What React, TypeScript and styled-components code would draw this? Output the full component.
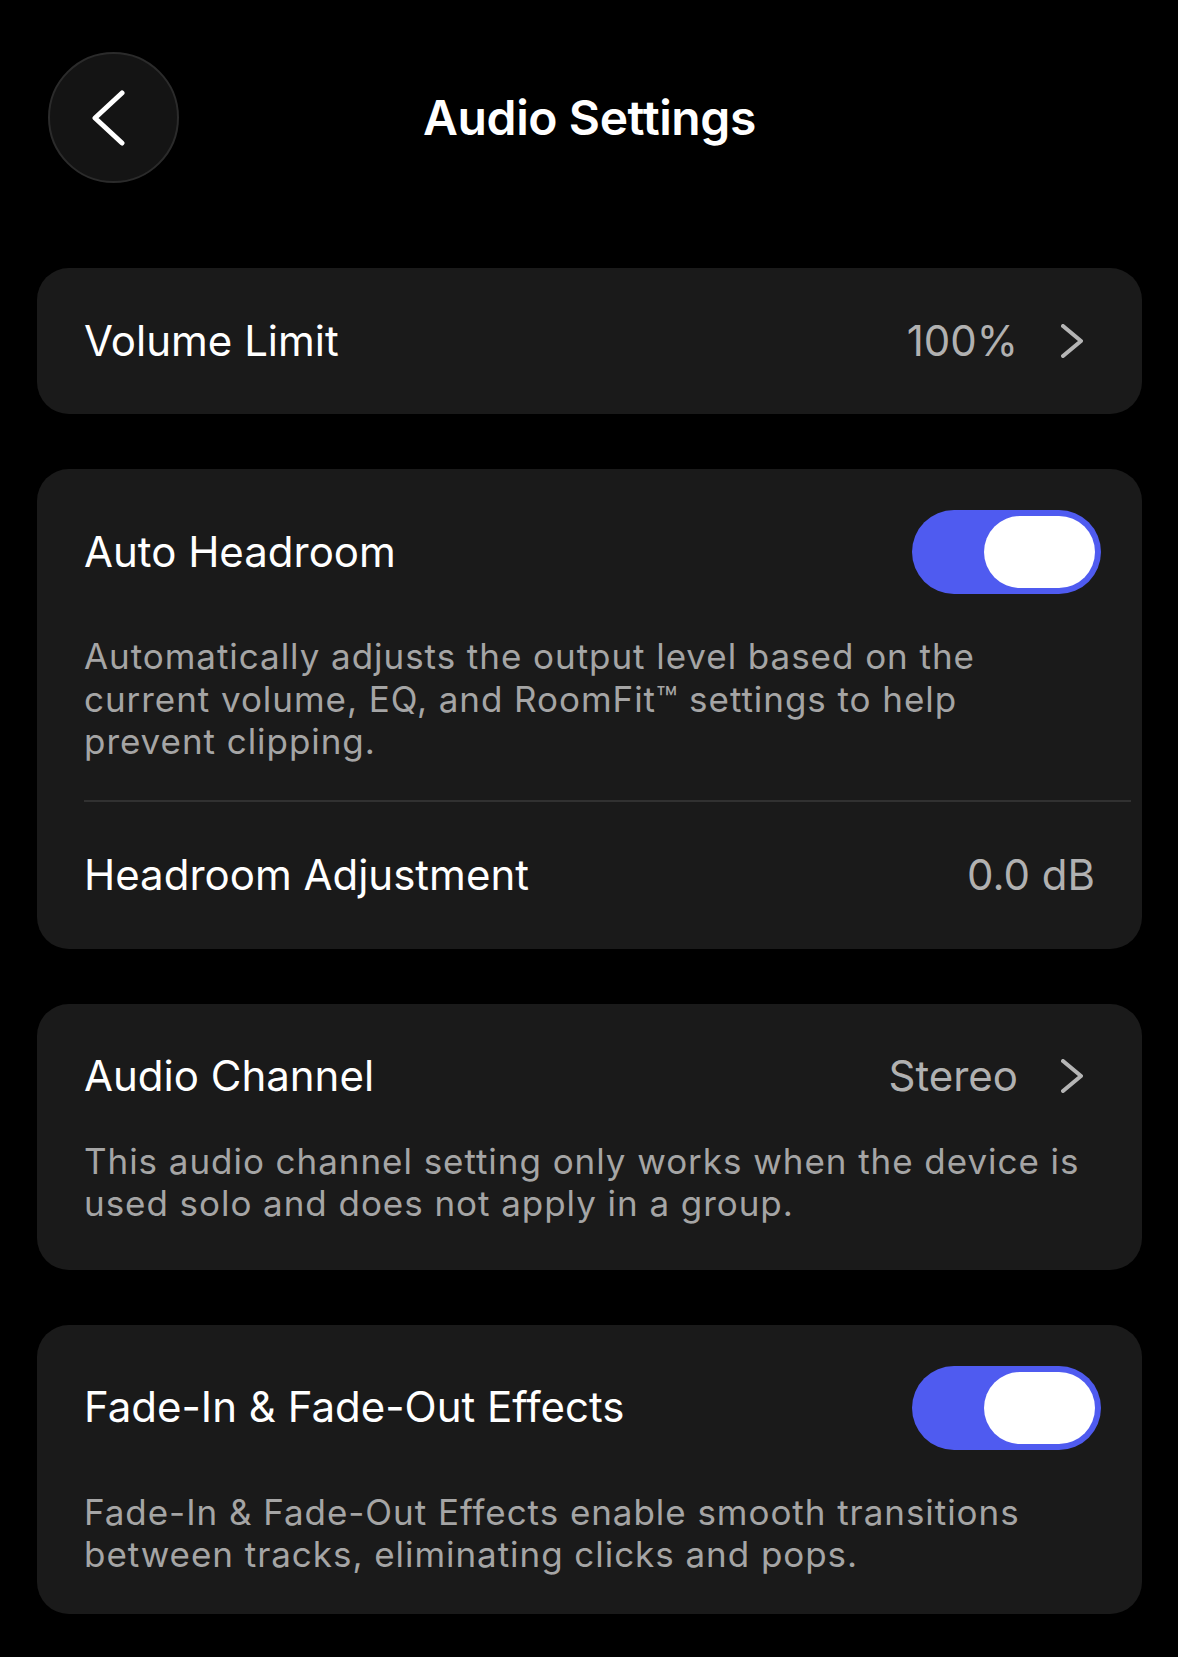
import React from "react";
import styled, { createGlobalStyle } from "styled-components";

const GlobalStyle = createGlobalStyle`
  html, body {
    margin: 0;
    padding: 0;
    background: #000;
  }
  body {
    font-family: Inter, "Noto Sans", "Liberation Sans", sans-serif;
    -webkit-font-smoothing: antialiased;
  }
`;

const Page = styled.div`
  width: 1178px;
  min-height: 1657px;
  box-sizing: border-box;
  background: #000;
  padding: 52px 36px 40px 37px;
  display: flex;
  flex-direction: column;
`;

const Header = styled.header`
  display: grid;
  grid-template-columns: 1fr auto 1fr;
  align-items: center;
  margin-bottom: 85px;
`;

const BackButton = styled.button`
  width: 131px;
  height: 131px;
  margin-left: 11px;
  border-radius: 50%;
  background: #141414;
  border: 2px solid #2b2b2b;
  box-sizing: border-box;
  display: flex;
  align-items: center;
  justify-content: center;
  padding: 0 10px 0 0;
  cursor: pointer;
  justify-self: start;
`;

const Title = styled.h1`
  margin: 0;
  color: #fff;
  font-size: 48px;
  font-weight: 600;
  letter-spacing: -0.4px;
  line-height: 1;
`;

const Cards = styled.div`
  display: flex;
  flex-direction: column;
  gap: 55px;
`;

const Card = styled.section<{ $pt?: number; $pb?: number }>`
  background: #1a1a1a;
  border-radius: 32px;
  padding: ${(p) => p.$pt ?? 41}px 47px ${(p) => p.$pb ?? 41}px 47px;
  display: flex;
  flex-direction: column;
`;

const Row = styled.div<{ $h?: number }>`
  display: flex;
  align-items: center;
  justify-content: space-between;
  min-height: ${(p) => p.$h ?? 64}px;
`;

const Label = styled.span`
  color: #fff;
  font-size: 42px;
  font-weight: 400;
  line-height: 1.2;
`;

const ValueGroup = styled.div<{ $chevron?: boolean }>`
  display: flex;
  align-items: center;
  gap: 43px;
  margin-right: ${(p) => (p.$chevron ? 12 : 0)}px;
`;

const Value = styled.span`
  color: #b1b1b1;
  font-size: 42px;
  font-weight: 400;
  line-height: 1.2;
`;

const Description = styled.p<{ $gap?: number }>`
  margin: ${(p) => p.$gap ?? 41}px 0 0;
  color: #a5a5a5;
  font-size: 35px;
  line-height: 42.5px;
  font-weight: 400;
  letter-spacing: 0.95px;
`;

const Divider = styled.hr`
  border: none;
  height: 2px;
  background: #313131;
  margin: 37px -36px 0 0;
`;

const Track = styled.div<{ $on?: boolean }>`
  width: 189px;
  height: 84px;
  border-radius: 42px;
  background: ${(p) => (p.$on ? "#4f5bf0" : "#3a3a3c")};
  box-sizing: border-box;
  padding: 6px;
  display: flex;
  justify-content: ${(p) => (p.$on ? "flex-end" : "flex-start")};
  margin-right: -6px;
`;

const Knob = styled.div`
  width: 111px;
  height: 72px;
  border-radius: 36px;
  background: #fff;
`;

const Chevron = ({ dir = "right" }: { dir?: "left" | "right" }) =>
  dir === "right" ? (
    <svg width="22" height="34" viewBox="0 0 22 34" fill="none">
      <path d="M2 2 L20 17 L2 32" stroke="#b5b5b5" strokeWidth="4" strokeLinecap="round" strokeLinejoin="round" />
    </svg>
  ) : (
    <svg width="36" height="56" viewBox="0 0 36 56" fill="none">
      <path d="M31 3 L4 28 L31 53" stroke="#fff" strokeWidth="5" strokeLinecap="round" strokeLinejoin="round" />
    </svg>
  );

const Toggle = ({ on }: { on: boolean }) => (
  <Track $on={on}>
    <Knob />
  </Track>
);

export default function App() {
  return (
    <>
      <GlobalStyle />
      <Page>
        <Header>
          <BackButton aria-label="Back">
            <Chevron dir="left" />
          </BackButton>
          <Title>Audio Settings</Title>
          <div />
        </Header>
        <Cards>
          <Card>
            <Row>
              <Label>Volume Limit</Label>
              <ValueGroup $chevron>
                <Value>100%</Value>
                <Chevron />
              </ValueGroup>
            </Row>
          </Card>

          <Card $pb={0}>
            <Row $h={84}>
              <Label>Auto Headroom</Label>
              <Toggle on />
            </Row>
            <Description>
              Automatically adjusts the output level based on the current volume, EQ, and RoomFit™ settings to help
              prevent clipping.
            </Description>
            <Divider />
            <Row $h={147}>
              <Label>Headroom Adjustment</Label>
              <Value>0.0 dB</Value>
            </Row>
          </Card>

          <Card $pt={41} $pb={45}>
            <Row>
              <Label>Audio Channel</Label>
              <ValueGroup $chevron>
                <Value>Stereo</Value>
                <Chevron />
              </ValueGroup>
            </Row>
            <Description $gap={31}>
              This audio channel setting only works when the device is used solo and does not apply in a group.
            </Description>
          </Card>

          <Card $pb={38}>
            <Row $h={84}>
              <Label>Fade-In &amp; Fade-Out Effects</Label>
              <Toggle on />
            </Row>
            <Description>
              Fade-In &amp; Fade-Out Effects enable smooth transitions between tracks, eliminating clicks and pops.
            </Description>
          </Card>
        </Cards>
      </Page>
    </>
  );
}
